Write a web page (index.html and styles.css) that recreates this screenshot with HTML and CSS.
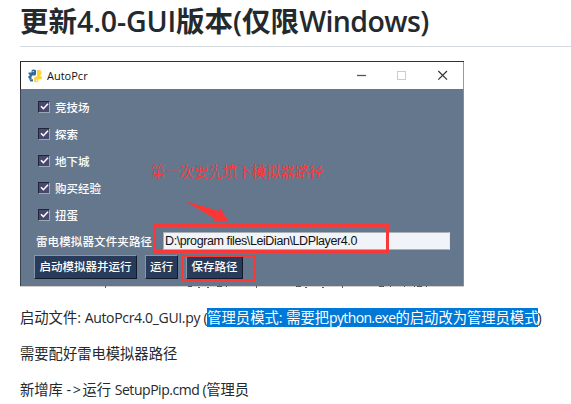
FILE: index.html
```
<!DOCTYPE html>
<html lang="zh-CN">
<head>
<meta charset="utf-8">
<title>AutoPcr</title>
<link rel="stylesheet" href="styles.css">
</head>
<body>
<main class="doc">
  <h1>更新<span class="h-ver">4.0-GUI</span>版本(仅限<span class="h-win">Windows)</span></h1>
  <section class="window">
    <header class="titlebar">
      <svg class="logo" width="14" height="14" viewBox="0 0 14 14">
        <path fill="#306998" d="M3.6 1.2Q5.5 0 8 1.2V5Q8 6.5 6.5 6.5H4.5Q3.5 6.5 3.5 8V10H2Q.2 9.5.2 7.5L2 6 .5 5V3.5H3.6Z"/>
        <path fill="#306998" d="M1 10.2h4v2.2H2.5Z"/>
        <path fill="#ffd43b" d="M9 1h3l1.5 2v2L12 6.4l1.8 1.4v2.5H10.5v2Q8 14 6 12.7V9Q6 7.5 7.5 7.5H8.5Q9 7.5 9 6Z"/>
        <circle cx="5.2" cy="2.6" r=".7" fill="#fff"/><circle cx="8.7" cy="11.3" r=".7" fill="#fff"/>
      </svg>
      <span class="title">AutoPcr</span>
      <svg class="controls" width="92" height="12" viewBox="0 0 92 12" fill="none">
        <path d="M1 5.5h9" stroke="#555" stroke-width="1.3"/>
        <rect x="41.5" y="1.5" width="8" height="8" stroke="#ccc"/>
        <path d="M82.3 1 91 9.7M91 1 82.3 9.7" stroke="#333" stroke-width="1.2"/>
      </svg>
    </header>
    <div class="panel">
      <div class="option"><i class="check"><svg width="9" height="9" viewBox="0 0 9 9"><path d="M1 4.2 3.4 6.7 8 1.8"/></svg></i><span>竞技场</span></div>
      <div class="option"><i class="check"><svg width="9" height="9" viewBox="0 0 9 9"><path d="M1 4.2 3.4 6.7 8 1.8"/></svg></i><span>探索</span></div>
      <div class="option"><i class="check"><svg width="9" height="9" viewBox="0 0 9 9"><path d="M1 4.2 3.4 6.7 8 1.8"/></svg></i><span>地下城</span></div>
      <div class="option"><i class="check"><svg width="9" height="9" viewBox="0 0 9 9"><path d="M1 4.2 3.4 6.7 8 1.8"/></svg></i><span>购买经验</span></div>
      <div class="option"><i class="check"><svg width="9" height="9" viewBox="0 0 9 9"><path d="M1 4.2 3.4 6.7 8 1.8"/></svg></i><span>扭蛋</span></div>
      <div class="path-row"><span class="path-label">雷电模拟器文件夹路径</span><div class="field">D:\program files\LeiDian\LDPlayer4.0</div></div>
      <div class="actions"><div class="btn start">启动模拟器并运行</div><div class="btn run">运行</div><div class="btn save">保存路径</div></div>
    </div>
    <svg class="edge" width="444" height="2" viewBox="0 0 444 2">
      <path fill="#d4d0d0" d="M0 0h445v1H0z"/>
      <path fill="#343840" d="M85 0h1v2h-1zM168 0h4v1h-4zM178 1h2v1h-2zM187 1h2v1h-2zM197 0h5v1h-5zM206 0h1v1h-1zM236 0h1v2h-1zM276 0h5v1h-5zM285 1h2v1h-2zM302 1h2v1h-2zM322 0h1v2h-1zM359 0h5v1h-5zM370 0h1v1h-1zM384 0h1v1h-1zM394 0h1v1h-1zM397 0h5v1h-5zM406 0h1v1h-1z" opacity=".8"/>
    </svg>
    <div class="note">第一次要先填下模拟器路径</div>
    <svg class="arrow" width="46" height="24" viewBox="0 0 46 24"><path fill="#fa3737" d="M0 0 34 10 35 7 44 21 27 21 30 18Z"/></svg>
    <div class="mark mark-path"></div>
    <div class="mark mark-save"></div>
  </section>
  <p>启动文件: <span class="file">AutoPcr4.0_GUI.py (</span><mark>管理员模式: 需要把<span class="exe">python.exe</span>的启动改为管理员模式</mark><span class="close">)</span></p>
  <p>需要配好雷电模拟器路径</p>
  <p>新增库 <span class="to">-&gt;</span>运行 <span class="cmd">SetupPip.cmd (</span>管理员</p>
</main>
</body>
</html>
```
FILE: styles.css
```
* { box-sizing: border-box; }
html { overflow: hidden; }
body {
  margin: 0;
  height: 404px;
  overflow: hidden;
  background: #fff;
  color: #24292e;
  font-family: "Open Sans", "Noto Sans CJK SC", sans-serif;
}
.doc { padding-left: 20px; }
h1 {
  margin: 0 0 14px;
  height: 47px;
  border-bottom: 1px solid #d5dae0;
  font-size: 28.5px;
  font-weight: 600;
  line-height: 42px;
  white-space: nowrap;
}
.h-ver { letter-spacing: -.15px; }
.h-win { letter-spacing: -.6px; }
.window {
  position: relative;
  width: 444px;
  height: 227px;
  border-top: 1px solid #333;
}
.titlebar {
  display: flex;
  align-items: center;
  height: 27px;
  padding: 0 15px 0 7px;
  border-left: 1px solid #222;
  border-right: 1px solid #999;
  background: #fff;
}
.title { margin: -1px 0 0 5px; color: #111; font-size: 11px; }
.controls { margin-left: auto; }
.panel {
  height: 197px;
  padding: 4px 13px 0 14px;
  border-left: 1px solid #39424e;
  border-right: 1px solid #878d94;
  background: #64778d;
  color: #fff;
  font-family: "Noto Sans CJK SC", sans-serif;
  font-size: 11.5px;
  font-weight: 500;
  white-space: nowrap;
}
.option { display: flex; align-items: center; height: 27px; padding-left: 3px; }
.check {
  display: grid;
  place-items: center;
  width: 12px;
  height: 12px;
  margin-right: 5px;
  border: 1px solid;
  border-color: #202633 #9ba8b6 #9ba8b6 #202633;
  background: #47476f;
}
.check path { fill: none; stroke: #fff; stroke-width: 1.6; }
.path-row { display: flex; align-items: center; height: 25px; }
.path-label { flex: none; width: 128px; padding-left: 1px; letter-spacing: .12px; }
.field {
  flex: none;
  width: 287px;
  height: 18px;
  padding-left: 1px;
  border: 1px solid #a9b0b7;
  border-right-color: #e5e9ed;
  background: #f0f3f7;
  color: #111;
  font: 12.5px/16px "Liberation Sans", sans-serif;
  letter-spacing: -.4px;
}
.actions { display: flex; padding-top: 2px; margin-left: -1px; }
.btn {
  height: 24px;
  border: 1px solid;
  border-color: #8796a8 #111a2b #111a2b #8796a8;
  background: #283b5b;
  text-align: center;
  line-height: 21px;
}
.start { width: 103px; }
.run { width: 33px; margin-left: 8px; }
.save { width: 57px; margin-left: 8px; }
.edge { display: block; }
.note {
  position: absolute;
  left: 131px;
  top: 98px;
  color: #f23b3d;
  font: 14.4px/22px "Noto Sans CJK SC", sans-serif;
  white-space: nowrap;
}
.arrow { position: absolute; left: 165px; top: 139px; }
.mark { position: absolute; border: 3px solid #f93838; }
.mark-path { left: 133px; top: 162px; width: 236px; height: 29px; }
.mark-save { left: 161px; top: 193px; width: 75px; height: 26px; border-width: 2px; }
p {
  margin: 0;
  height: 36px;
  font-size: 14.3px;
  line-height: 36px;
  white-space: nowrap;
}
.window + p { margin-top: 12px; }
.file { font-size: 14px; letter-spacing: -.33px; }
.exe { font-size: 14px; letter-spacing: -.65px; }
.to { letter-spacing: 1.5px; }
.cmd { font-size: 14px; letter-spacing: -.45px; }
.close { margin-left: -1px; }
mark { display: inline-block; height: 19px; line-height: 19px; background: #0078d7; color: #fff; }
```
